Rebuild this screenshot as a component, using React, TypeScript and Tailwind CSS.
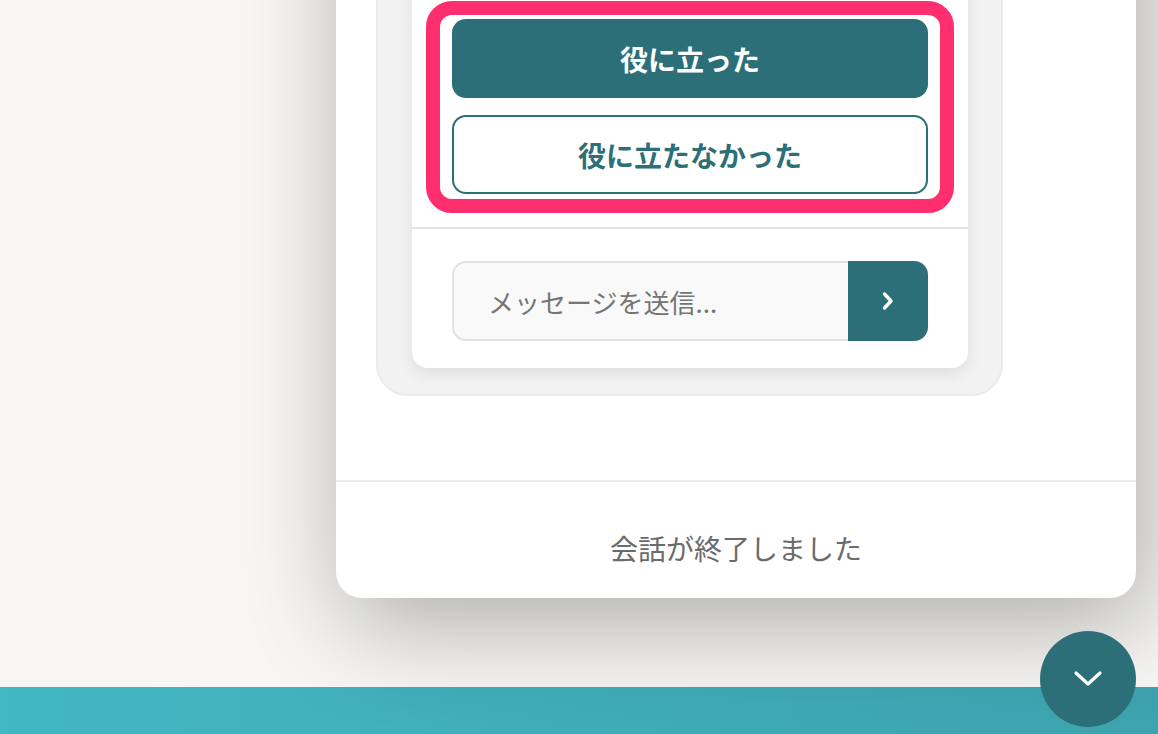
import React from "react";

const font = { fontFamily: '"Noto Sans CJK JP", "Noto Sans", sans-serif' };

export default function App() {
  return (
    <div
      className="relative w-[1158px] h-[734px] overflow-hidden bg-[#f7f6f4] flex flex-col font-['Noto_Sans_CJK_JP',sans-serif]"
    >
      <div className="flex-1" />
      <div className="h-[47px] bg-gradient-to-r from-[#42b8c4] to-[#3da3af]" />

      {/* Chat widget panel */}
      <div className="absolute left-[336px] bottom-[136px] w-[800px] rounded-[26px] bg-white shadow-[10px_26px_100px_rgba(0,0,0,0.3)] flex flex-col">
        <div className="pl-[40px] pt-[40px] pb-[84px]">
          <div className="w-[627px] rounded-[32px] border-2 border-[#ebebeb] bg-[#f2f2f2] pl-[34px] pr-[33px] pt-[34px] pb-[26px]">
            <div className="w-[556px] rounded-2xl bg-white shadow-[0_6px_16px_rgba(0,0,0,0.08)] flex flex-col">
              <div className="pt-[120px] px-[14px] pb-[14px]">
                <div className="rounded-[26px] border-[14px] border-[#ff2e6e] px-[12px] pt-[4px] pb-[5px] flex flex-col gap-[17px]">
                  <button className="h-[79px] w-full rounded-[14px] bg-[#2c6f78] text-white text-[28px] font-bold leading-none" style={font}>
                    役に立った
                  </button>
                  <button className="h-[79px] w-full rounded-[14px] border-2 border-[#2c6f78] bg-white text-[#2c6f78] text-[28px] font-bold leading-none" style={font}>
                    役に立たなかった
                  </button>
                </div>
              </div>
              <div className="h-[2px] bg-[#e3e3e3]" />
              <div className="px-[40px] pt-[32px] pb-[27px] flex">
                <input
                  readOnly
                  placeholder="メッセージを送信..."
                  className="h-[80px] flex-1 min-w-0 rounded-l-[14px] border-2 border-r-0 border-[#e2e2e2] bg-[#f9f9f9] pl-[34px] text-[26px] text-[#666] placeholder:text-[#757575] outline-none"
                  style={font}
                />
                <button className="h-[80px] w-[80px] rounded-r-[14px] bg-[#2c6f78] flex items-center justify-center">
                  <svg width="14" height="20" viewBox="0 0 14 20" fill="none">
                    <path d="M3.5 3 L10 10 L3.5 17" stroke="white" strokeWidth="3.4" strokeLinecap="round" strokeLinejoin="round" />
                  </svg>
                </button>
              </div>
            </div>
          </div>
        </div>
        <div className="h-[2px] bg-[#ececec]" />
        <div className="h-[116px] pt-[16px] flex items-center justify-center">
          <span className="text-[28px] text-[#6b6b6b] leading-none" style={font}>
            会話が終了しました
          </span>
        </div>
      </div>

      {/* Floating toggle button */}
      <button className="absolute left-[1040px] top-[631px] w-[96px] h-[96px] rounded-full bg-[#2c6f78] flex items-center justify-center">
        <svg width="30" height="18" viewBox="0 0 30 18" fill="none">
          <path d="M3 3 L15 14 L27 3" stroke="white" strokeWidth="3.2" strokeLinecap="round" strokeLinejoin="round" />
        </svg>
      </button>
    </div>
  );
}
